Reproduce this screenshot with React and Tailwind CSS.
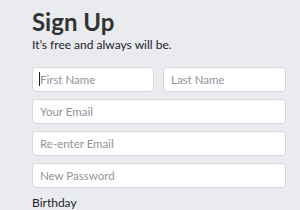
import React from "react";

const Field = ({ placeholder, caret, className = "" }) => (
  <div className={`relative h-[25px] ${className}`}>
    <input
      type="text"
      placeholder={placeholder}
      className="w-full h-full rounded-[4px] border border-[#d3d6db] bg-white px-[7px] text-[11.5px] text-[#1d2129] placeholder-[#90949c] outline-none"
    />
    {caret && <span className="absolute left-[7px] top-[6px] h-[14px] w-px bg-[#1d2129]" />}
  </div>
);

export default function App() {
  return (
    <div
      className="w-[300px] h-[210px] overflow-hidden bg-[#e9ebee] pl-[32px] pr-[14px] pt-[8px] text-[#333]"
      style={{ fontFamily: "Lato, 'Open Sans', sans-serif" }}
    >
      <h1 className="text-[24px] font-bold leading-[28px] text-[#333]">Sign Up</h1>
      <p className="text-[12px] leading-[16px] mt-[1px] text-[#1d2129]">It’s free and always will be.</p>

      <div className="mt-[13px] flex flex-col gap-[7px]">
        <div className="flex gap-[9px]">
          <Field placeholder="First Name" caret className="w-[122px]" />
          <Field placeholder="Last Name" className="flex-1" />
        </div>
        <Field placeholder="Your Email" />
        <Field placeholder="Re-enter Email" />
        <Field placeholder="New Password" />
      </div>

      <p className="mt-[7px] text-[12px] text-[#1d2129]">Birthday</p>
    </div>
  );
}
